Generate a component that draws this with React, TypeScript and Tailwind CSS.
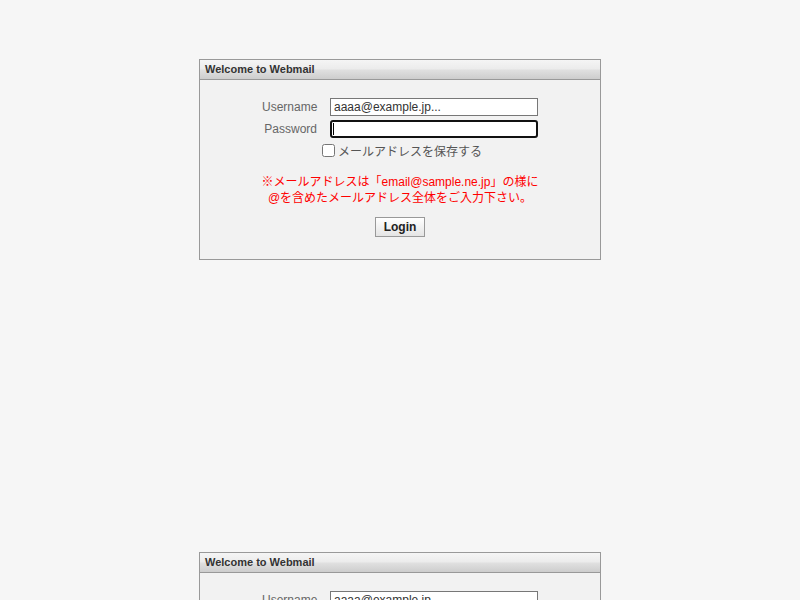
import React from "react";

const font = "font-['Liberation_Sans','Noto_Sans_CJK_JP',sans-serif]";

function LoginPanel() {
  return (
    <div className="mx-auto w-[402px] border border-[#999] bg-[#f2f2f2]">
      {/* title bar */}
      <div className="h-[20px] border-b border-[#999] bg-[linear-gradient(to_bottom,#f5f5f5_0%,#ececec_45%,#dfdfdf_55%,#cdcdcd_100%)] pl-[5px] text-[11px] font-bold leading-[18px] text-[#333]">
        Welcome to Webmail
      </div>

      <div className="pt-[18px] pb-[22px] text-[12px]">
        <div className="flex justify-center">
          <label className="w-[68px] pr-[13px] text-right leading-[18px] text-[#666]">Username</label>
          <input
            readOnly
            value="aaaa@example.jp..."
            className="h-[18px] w-[208px] border border-[#777] bg-white px-[3px] text-[12px] leading-[16px] text-[#333] outline-none"
          />
        </div>

        <div className="mt-[4px] flex justify-center">
          <label className="w-[68px] pr-[13px] text-right leading-[18px] text-[#666]">Password</label>
          <div className="relative">
            <input
              readOnly
              type="password"
              className="block h-[18px] w-[208px] rounded-[3px] border-2 border-[#111] bg-white outline-none"
            />
            <span className="absolute left-[3px] top-[3px] h-[12px] w-px bg-black" />
          </div>
        </div>

        <div className="mt-[4px] flex items-start justify-center pl-[4px]">
          <input type="checkbox" className="m-0 mt-[2px] h-[13px] w-[13px]" />
          <span className="ml-[3px] pt-[2px] leading-[17px] text-[#555]">メールアドレスを保存する</span>
        </div>

        <p className="mt-[13px] text-center leading-[16px] text-[#f00]">
          ※メールアドレスは「email@sample.ne.jp」の様に
          <br />
          @を含めたメールアドレス全体をご入力下さい。
        </p>

        <div className="mt-[11px] flex justify-center">
          <button className="h-[20px] w-[50px] border border-[#999] bg-[linear-gradient(to_bottom,#ffffff,#e4e4e4)] text-[12px] font-bold leading-[18px] text-[#222]">
            Login
          </button>
        </div>
      </div>
    </div>
  );
}

export default function App() {
  return (
    <div className={`min-h-[600px] bg-[#f6f6f6] pt-[59px] ${font}`}>
      <LoginPanel />
      <div className="mt-[292px]">
        <LoginPanel />
      </div>
    </div>
  );
}
